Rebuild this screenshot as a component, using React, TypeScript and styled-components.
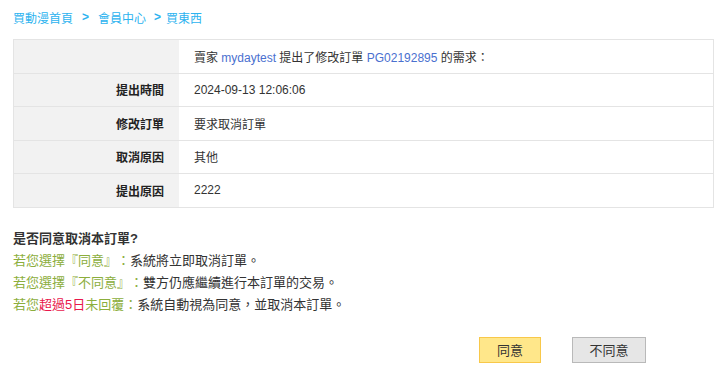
import styled, { createGlobalStyle } from "styled-components";

const GlobalStyle = createGlobalStyle`
  body {
    margin: 0;
    background: #fff;
    font-family: "Liberation Sans", Arial, "Noto Sans CJK TC", sans-serif;
    color: #333;
    text-spacing-trim: space-all;
  }
`;

const rows = [
  { label: "提出時間", value: "2024-09-13 12:06:06" },
  { label: "修改訂單", value: "要求取消訂單" },
  { label: "取消原因", value: "其他" },
  { label: "提出原因", value: "2222" },
];

export default function App() {
  return (
    <>
      <GlobalStyle />
      <Page>
        <Breadcrumb>
          <Crumb>買動漫首頁</Crumb>
          <Sep $left={9} $right={9}>&gt;</Sep>
          <Crumb>會員中心</Crumb>
          <Sep $left={8} $right={5}>&gt;</Sep>
          <Crumb>買東西</Crumb>
        </Breadcrumb>

        <InfoTable>
          <tbody>
            <Row>
              <Label></Label>
              <Value>
                賣家 <Link>mydaytest</Link> 提出了修改訂單 <Link>PG02192895</Link> 的需求：
              </Value>
            </Row>
            {rows.map((r) => (
              <Row key={r.label}>
                <Label>{r.label}</Label>
                <Value>{r.value}</Value>
              </Row>
            ))}
          </tbody>
        </InfoTable>

        <Notice>
          <NoticeTitle>是否同意取消本訂單?</NoticeTitle>
          <NoticeLine>
            <Green>若您選擇『同意』：</Green>系統將立即取消訂單。
          </NoticeLine>
          <NoticeLine>
            <Green>若您選擇『不同意』：</Green>雙方仍應繼續進行本訂單的交易。
          </NoticeLine>
          <NoticeLine>
            <Green>若您</Green>
            <Red>超過5日</Red>
            <Green>未回覆：</Green>系統自動視為同意，並取消本訂單。
          </NoticeLine>
        </Notice>

        <Actions>
          <Button $variant="agree">同意</Button>
          <Button $variant="reject">不同意</Button>
        </Actions>
      </Page>
    </>
  );
}

const Page = styled.div`
  padding: 0 1px 0 13px;
`;

const Breadcrumb = styled.div`
  display: flex;
  align-items: center;
  height: 39px;
  padding-bottom: 5px;
  box-sizing: border-box;
  font-size: 12px;
  color: #2cb3ef;
  font-family: "Noto Sans CJK TC", sans-serif;
`;

const Crumb = styled.span``;

const Sep = styled.span<{ $left: number; $right: number }>`
  margin: 0 ${(p) => p.$right}px 0 ${(p) => p.$left}px;
  font-family: "Liberation Sans", sans-serif;
  font-weight: bold;
`;

const InfoTable = styled.table`
  width: 100%;
  border-collapse: collapse;
  font-size: 12px;
  border: 1px solid #e4e4e4;
`;

const Row = styled.tr`
  height: 33.5px;
  border-top: 1px solid #e4e4e4;
`;

const Label = styled.td`
  width: 150px;
  padding: 0 15px 0 0;
  background: #f2f2f2;
  text-align: right;
  font-weight: bold;
  color: #222;
`;

const Value = styled.td`
  padding: 0 0 0 15px;
  color: #333;
`;

const Link = styled.span`
  color: #4a70cf;
`;

const Notice = styled.div`
  margin-top: 20px;
  font-size: 13px;
  line-height: 22px;
  color: #333;
`;

const NoticeTitle = styled.div`
  font-weight: bold;
  color: #333;
`;

const NoticeLine = styled.div``;

const Green = styled.span`
  color: #8cae3c;
`;

const Red = styled.span`
  color: #e8174c;
`;

const Actions = styled.div`
  display: flex;
  justify-content: flex-end;
  gap: 31px;
  margin-top: 21px;
  padding-right: 68px;
`;

const Button = styled.button<{ $variant: "agree" | "reject" }>`
  height: 26px;
  box-sizing: border-box;
  padding: 0;
  width: ${(p) => (p.$variant === "agree" ? 62 : 74)}px;
  font-size: 13px;
  font-family: "Liberation Sans", "Noto Sans CJK TC", sans-serif;
  color: #333;
  background: ${(p) => (p.$variant === "agree" ? "#ffe78a" : "#e6e6e6")};
  border: 1px solid ${(p) => (p.$variant === "agree" ? "#f8c84a" : "#b9b9b9")};
  cursor: pointer;
`;
